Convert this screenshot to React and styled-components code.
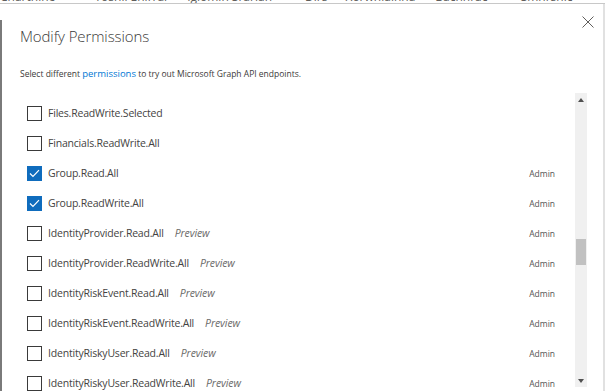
import React from 'react';
import styled, { createGlobalStyle } from 'styled-components';

const GlobalStyle = createGlobalStyle`
  html, body {
    margin: 0;
    padding: 0;
    background: #ffffff;
  }
  body {
    font-family: "Open Sans", "Noto Sans", sans-serif;
    color: #323130;
  }
`;

const permissions = [
  { name: 'Files.ReadWrite.Selected' },
  { name: 'Financials.ReadWrite.All' },
  { name: 'Group.Read.All', checked: true, admin: true },
  { name: 'Group.ReadWrite.All', checked: true, admin: true },
  { name: 'IdentityProvider.Read.All', preview: true, admin: true },
  { name: 'IdentityProvider.ReadWrite.All', preview: true, admin: true },
  { name: 'IdentityRiskEvent.Read.All', preview: true, admin: true },
  { name: 'IdentityRiskEvent.ReadWrite.All', preview: true, admin: true },
  { name: 'IdentityRiskyUser.Read.All', preview: true, admin: true },
  { name: 'IdentityRiskyUser.ReadWrite.All', preview: true, admin: true },
];

// tabs of the page behind the dialog, only their lower edge shows
const tabs = [
  { label: 'Chartnine', more: true, gap: 24 },
  { label: 'Yoshil Enirral', gap: 20 },
  { label: 'Iglomin Srarian', more: true, gap: 18 },
  { label: 'Dirs', gap: 18 },
  { label: 'Xorwnlainna', gap: 20 },
  { label: 'Bachnrac', more: true, gap: 18 },
  { label: 'Smnrsnic', more: true, gap: 0 },
];

const Page = styled.div`
  width: 605px;
  height: 391px;
  overflow: hidden;
  display: flex;
  flex-direction: column;
`;

const TabStrip = styled.div`
  height: 3px;
  overflow: hidden;
  border-bottom: 1px solid #c8c8c8;
  display: flex;
  flex-shrink: 0;
`;

const Tab = styled.span`
  margin-top: -10px;
  margin-right: ${p => p.$gap}px;
  font-size: 12px;
  line-height: 14px;
  color: #605e5c;
  white-space: nowrap;
`;

const Body = styled.div`
  flex: 1;
  display: flex;
  min-height: 0;
`;

const LeftEdge = styled.div`
  width: 2px;
  margin-top: 16px;
  background: #7a7a7a;
  flex-shrink: 0;
`;

const Dialog = styled.div`
  flex: 1;
  display: flex;
  flex-direction: column;
  background: #ffffff;
  min-width: 0;
`;

const RightEdge = styled.div`
  width: 2px;
  background: #e1e1e1;
  flex-shrink: 0;
`;

const Header = styled.div`
  display: flex;
  justify-content: space-between;
  align-items: flex-start;
  padding: 0 9px 0 18px;
`;

const Title = styled.h1`
  margin: 21px 0 0;
  font-size: 15px;
  font-weight: 300;
  line-height: 22px;
  letter-spacing: -0.1px;
  color: #3b3a39;
`;

const CloseButton = styled.button`
  margin-top: 12px;
  width: 12px;
  height: 12px;
  padding: 0;
  border: 0;
  background: none;
  display: flex;
  cursor: pointer;
`;

const Subtitle = styled.p`
  margin: 21px 0 0 18px;
  font-size: 8.5px;
  line-height: 12px;
  color: #3b3a39;
`;

const Link = styled.a`
  color: #0078d4;
  text-decoration: none;
  font-size: 9.5px;
`;

const ListArea = styled.div`
  flex: 1;
  display: flex;
  margin-top: 13px;
  min-height: 0;
  padding-right: 16px;
`;

const List = styled.div`
  flex: 1;
  padding: 5px 20px 0 25px;
  overflow: hidden;
`;

const Row = styled.div`
  height: 30px;
  display: flex;
  align-items: center;
`;

const Box = styled.span`
  width: 15px;
  height: 15px;
  box-sizing: border-box;
  border: 1px solid ${p => (p.$checked ? '#0f6cbd' : '#3a3a3a')};
  background: ${p => (p.$checked ? '#0f6cbd' : '#ffffff')};
  display: flex;
  align-items: center;
  justify-content: center;
  flex-shrink: 0;
`;

const Name = styled.span`
  margin-left: 6px;
  font-size: 10.5px;
  letter-spacing: -0.2px;
  color: #444342;
  white-space: nowrap;
`;

const Preview = styled.span`
  margin-left: 11px;
  font-size: 10.5px;
  letter-spacing: -0.1px;
  font-style: italic;
  color: #6b6a69;
`;

const Admin = styled.span`
  margin-left: auto;
  font-size: 8.5px;
  color: #555453;
`;

const Scrollbar = styled.div`
  width: 12px;
  background: #f0f0f0;
  display: flex;
  flex-direction: column;
  align-items: center;
  margin-bottom: 4px;
`;

const Arrow = styled.div`
  height: 13px;
  display: flex;
  align-items: center;
  justify-content: center;
`;

const Track = styled.div`
  flex: 1;
  width: 100%;
  display: flex;
  flex-direction: column;
  padding-top: 133px;
`;

const Thumb = styled.div`
  width: 10px;
  height: 26px;
  margin: 0 auto;
  background: #c1c1c1;
`;

function Check() {
  return (
    <svg width="11" height="9" viewBox="0 0 11 9">
      <path d="M1 4.5 L4 7.5 L10 1.2" fill="none" stroke="#ffffff" strokeWidth="1.2" />
    </svg>
  );
}

export default function App() {
  return (
    <>
      <GlobalStyle />
      <Page>
        <TabStrip>
          {tabs.map(t => (
            <Tab key={t.label} $gap={t.gap}>
              {t.label}
              {t.more ? ' \u22EF' : ''}
            </Tab>
          ))}
        </TabStrip>
        <Body>
          <LeftEdge />
          <Dialog>
            <Header>
              <Title>Modify Permissions</Title>
              <CloseButton aria-label="Close">
                <svg width="12" height="12" viewBox="0 0 12 12">
                  <path d="M0.5 0.5 L11.5 11.5 M11.5 0.5 L0.5 11.5" stroke="#605e5c" strokeWidth="1" />
                </svg>
              </CloseButton>
            </Header>
            <Subtitle>
              Select different <Link href="#">permissions</Link> to try out Microsoft Graph API endpoints.
            </Subtitle>
            <ListArea>
              <List>
                {permissions.map(p => (
                  <Row key={p.name}>
                    <Box $checked={p.checked}>{p.checked && <Check />}</Box>
                    <Name>{p.name}</Name>
                    {p.preview && <Preview>Preview</Preview>}
                    {p.admin && <Admin>Admin</Admin>}
                  </Row>
                ))}
              </List>
              <Scrollbar>
                <Arrow>
                  <svg width="6" height="4" viewBox="0 0 6 4"><path d="M0 4 L3 0 L6 4 Z" fill="#505050" /></svg>
                </Arrow>
                <Track>
                  <Thumb />
                </Track>
                <Arrow>
                  <svg width="6" height="4" viewBox="0 0 6 4"><path d="M0 0 L3 4 L6 0 Z" fill="#505050" /></svg>
                </Arrow>
              </Scrollbar>
            </ListArea>
          </Dialog>
          <RightEdge />
        </Body>
      </Page>
    </>
  );
}
